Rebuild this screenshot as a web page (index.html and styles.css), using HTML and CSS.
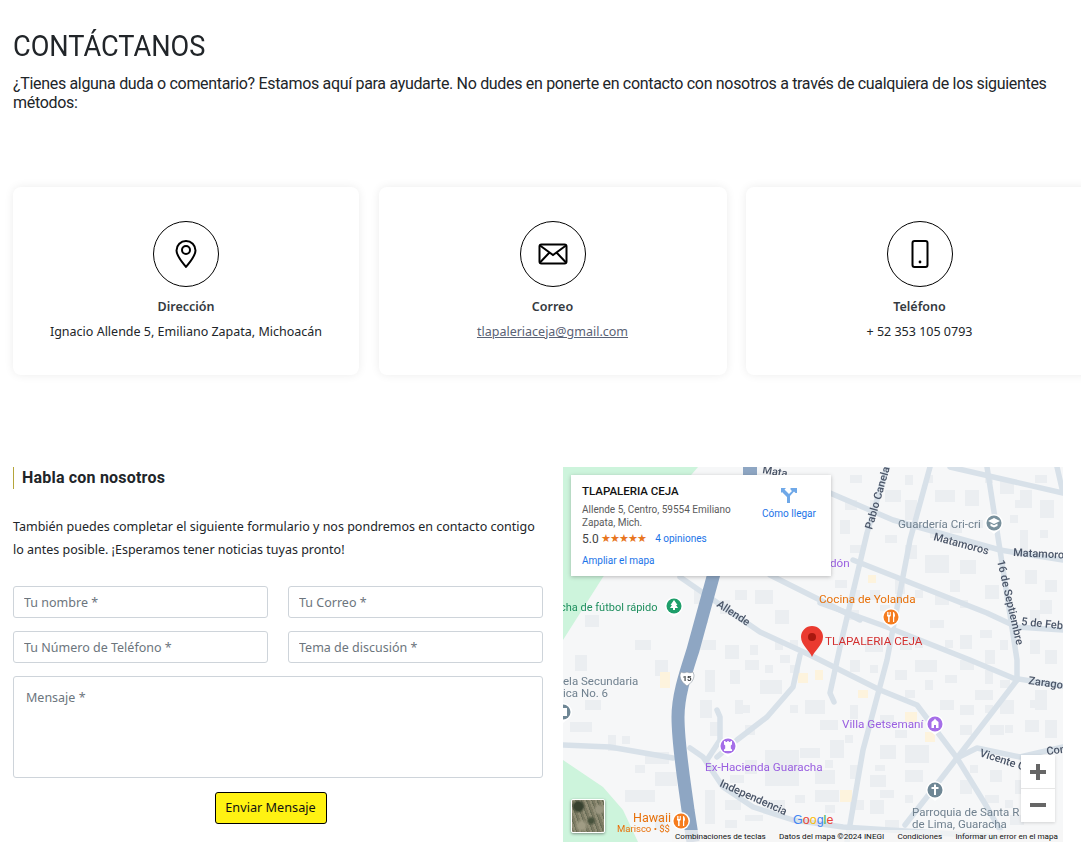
FILE: index.html
```html
<!DOCTYPE html>
<html lang="es">
<head>
<meta charset="utf-8">
<title>Contáctanos</title>
<link rel="stylesheet" href="styles.css">
</head>
<body>
<main class="page">
  <header class="intro">
    <h1>CONTÁCTANOS</h1>
    <p>¿Tienes alguna duda o comentario? Estamos aquí para ayudarte. No dudes en ponerte en contacto con nosotros a través de cualquiera de los siguientes métodos:</p>
  </header>

  <section class="cards">
    <article class="card">
      <div class="round">
        <svg width="26" height="30" viewBox="0 0 26 30" fill="none" stroke="#000" stroke-width="2"><path d="M13 28C9 23 3.500 17 3.500 11.500a9.500 9.500 0 0 1 19 0C22.500 17 17 23 13 28Z" stroke-linejoin="round"/><circle cx="13" cy="11" r="4"/></svg>
      </div>
      <h3>Dirección</h3>
      <p>Ignacio Allende 5, Emiliano Zapata, Michoacán</p>
    </article>
    <article class="card">
      <div class="round">
        <svg width="30" height="24" viewBox="0 0 30 24" fill="none" stroke="#000" stroke-width="2"><rect x="1.500" y="2.500" width="27" height="19" rx="2"/><path d="M2 3.500 15 13 28 3.500M2 20.500l9.500-10M28 20.500l-9.500-10"/></svg>
      </div>
      <h3>Correo</h3>
      <p><a href="#">tlapaleriaceja@gmail.com</a></p>
    </article>
    <article class="card">
      <div class="round">
        <svg width="20" height="30" viewBox="0 0 20 30" fill="none" stroke="#000" stroke-width="2"><rect x="2.500" y="2" width="15" height="26" rx="2"/><circle cx="10" cy="23" r="1.400" fill="#000" stroke="none"/></svg>
      </div>
      <h3>Teléfono</h3>
      <p>+ 52 353 105 0793</p>
    </article>
  </section>

  <section class="contact">
    <form class="form">
      <h2>Habla con nosotros</h2>
      <p class="lead">También puedes completar el siguiente formulario y nos pondremos en contacto contigo lo antes posible. ¡Esperamos tener noticias tuyas pronto!</p>
      <div class="fields">
        <input type="text" placeholder="Tu nombre *">
        <input type="text" placeholder="Tu Correo *">
        <input type="text" placeholder="Tu Número de Teléfono *">
        <input type="text" placeholder="Tema de discusión *">
        <textarea placeholder="Mensaje *"></textarea>
      </div>
      <div class="actions"><button type="button">Enviar Mensaje</button></div>
    </form>

    <div class="map">
      <svg class="map-art" width="500" height="375" viewBox="563 467 500 375">
        <rect class="land" x="563" y="467" width="500" height="375"/>
        <path class="park" d="M563 467H698L603 577 563 640ZM563 760 603 787 623 810 638 842H563Z"/>
        <path class="bld" d="M585 615h14v12h-14zM575 655h12v16h-12zM635 640h16v10h-16zM655 660h13v16h-13zM585 700h16v10h-16zM570 722h22v10h-22zM608 735h8v16h-8zM622 736h8v8h-8zM635 765h10v8h-10zM645 752h24v12h-24zM655 772h22v14h-22zM625 790h30v12h-30zM655 815h10v15h-10zM694 590h14v14h-14zM700 615h8v8h-8zM720 600h10v14h-10zM735 590h12v10h-12zM755 590h18v14h-18zM775 610h14v14h-14zM700 640h16v10h-16zM725 645h14v14h-14zM750 645h8v10h-8zM705 670h10v22h-10zM730 670h10v14h-10zM745 660h14v10h-14zM760 680h22v14h-22zM700 700h12v18h-12zM735 700h8v14h-8zM745 725h10v10h-10zM710 722h10v14h-10zM765 750h34v36h-34zM805 700h20v14h-20zM820 720h18v10h-18zM800 748h20v10h-20zM815 770h20v14h-20zM765 800h20v10h-20zM815 790h24v12h-24zM705 790h10v34h-10zM725 800h16v10h-16zM845 610h14v10h-14zM865 640h18v12h-18zM840 520h10v14h-10zM885 490h16v12h-16zM905 500h12v20h-12zM935 490h20v12h-20zM965 490h14v16h-14zM1000 480h14v14h-14zM1020 490h12v18h-12zM1040 500h14v18h-14zM905 545h12v14h-12zM925 555h24v18h-24zM960 560h16v14h-16zM1020 530h8v24h-8zM1040 530h8v8h-8zM1025 570h12v14h-12zM1045 580h12v12h-12zM1040 600h12v14h-12zM950 580h10v12h-10zM985 585h14v14h-14zM930 620h14v8h-14zM960 635h12v14h-12zM1030 640h10v14h-10zM1045 650h12v14h-12zM915 660h22v12h-22zM960 660h14v10h-14zM975 690h18v10h-18zM1035 690h12v20h-12zM1025 720h14v12h-14zM1045 720h12v18h-12zM990 725h14v10h-14zM905 745h24v18h-24zM905 770h18v12h-18zM880 745h16v14h-16zM870 775h16v12h-16zM990 770h12v12h-12zM1015 780h18v14h-18zM1040 790h14v20h-14zM1010 815h14v10h-14zM960 780h12v14h-12zM870 800h14v14h-14zM885 820h14v10h-14zM940 700h14v10h-14zM1000 700h14v14h-14zM830 740h14v18h-14zM880 790h14v8h-14zM1030 610h10v10h-10zM850 590h10v10h-10zM835 580h12v8h-12zM870 590h10v10h-10zM895 580h10v14h-10zM915 590h8v8h-8zM935 595h14v10h-14zM960 600h8v8h-8zM880 605h10v6h-10zM900 640h12v10h-12zM915 640h8v8h-8zM945 640h8v8h-8zM980 630h12v8h-12zM985 650h10v14h-10zM1000 640h8v10h-8zM850 660h10v12h-10zM870 665h8v8h-8zM895 670h12v10h-12zM905 690h10v8h-10zM925 680h8v10h-8zM945 675h12v8h-12zM985 670h8v14h-8zM1000 680h10v8h-10zM960 705h14v10h-14zM985 705h8v8h-8zM960 725h12v10h-12zM1005 725h8v8h-8zM1030 700h8v8h-8zM850 705h8v14h-8zM880 715h14v8h-14zM895 730h12v8h-12zM845 735h8v8h-8zM875 765h10v6h-10zM825 760h8v8h-8zM850 765h8v14h-8zM825 805h10v8h-10zM850 800h14v10h-14zM905 795h8v8h-8zM970 765h8v8h-8zM985 795h14v8h-14zM1005 800h8v8h-8zM1035 770h8v10h-8zM1020 760h8v8h-8zM740 705h10v8h-10zM775 640h8v10h-8zM790 640h8v8h-8zM780 655h10v8h-10zM765 665h8v8h-8zM790 665h10v8h-10zM790 705h8v8h-8zM745 760h12v14h-12zM730 775h14v8h-14zM795 795h10v8h-10zM745 815h18v6h-18zM725 820h12v8h-12zM975 520h8v8h-8zM1010 515h8v8h-8zM1015 500h8v8h-8zM930 530h8v8h-8zM950 525h12v8h-12zM885 535h12v8h-12zM850 545h14v8h-14zM985 475h8v8h-8zM1035 475h12v8h-12zM925 475h8v8h-8zM905 475h8v10h-8zM850 475h12v8h-12zM870 500h8v14h-8zM845 500h12v10h-12z"/>
        <path class="tan" d="M660 672h10v16h-10zM798 673h10v10h-10zM868 575h8v8h-8zM858 690h10v8h-10zM905 712h12v10h-12zM925 732h10v10h-10zM840 790h12v12h-12zM815 670h8v10h-8z"/>
        <g class="road">
          <path d="M887 467 867 533 840 647 830 693 834 702"/>
          <path d="M930 467 910 540 887 660 863 750 847 842"/>
          <path d="M830 493 893 520 1000 550 1063 560"/>
          <path d="M987 467 1000 550 1017 660 1017 680"/>
          <path d="M950 467 1063 493M1057 467 1063 493"/>
          <path d="M853 560 987 613 1017 627 1063 630"/>
          <path d="M820 603 887 627 970 660 1013 678 1063 686"/>
          <path d="M1017 680 957 758 930 793 905 825"/>
          <path d="M957 758 977 748 1020 757 1063 747"/>
          <path d="M800 655 793 687 767 717 737 740 717 757"/>
          <path d="M717 710 720 717 720 740 707 760"/>
          <path d="M690 748 703 757 723 787 753 807 793 820 843 827 1000 837"/>
          <path d="M563 745 610 747 673 758"/>
          <path d="M680 577 760 632 810 655 880 690 917 705 957 758 987 807 1000 830"/>
          <path d="M770 575 860 620"/>
        </g>
        <path class="hwy" d="M722 545 713 577 693 650C686 672 678 695 678 717 678 745 684 780 688 810L693 842"/>
        <rect class="transit" x="743" y="467" width="14" height="8"/>

        <g class="t-grey">
          <text x="898" y="528">Guardería Cri-cri</text>
          <text x="563" y="685">ela Secundaria</text>
          <text x="563" y="697">ica No. 6</text>
          <text x="912" y="816">Parroquia de Santa R</text>
          <text x="912" y="828">de Lima, Guaracha</text>
        </g>
        <g class="t-road">
          <text transform="translate(933 540) rotate(15)">Matamoros</text>
          <text transform="translate(1013 556) rotate(3)">Matamoros</text>
          <text transform="translate(997 561) rotate(77)">16 de Septiembre</text>
          <text transform="translate(1021 625) rotate(6)">5 de Feb</text>
          <text transform="translate(872 530) rotate(-74)">Pablo Canela</text>
          <text transform="translate(716 606) rotate(33)">Allende</text>
          <text transform="translate(719 786) rotate(24)">Independencia</text>
          <text transform="translate(979 756) rotate(18)">Vicente G</text>
          <text transform="translate(1047 755) rotate(-8)">Con</text>
          <text transform="translate(1028 684) rotate(8)">Zarago</text>
          <text transform="translate(762 473) rotate(10)">Mata</text>
        </g>
        <text class="t-purple" x="830" y="567">dón</text>
        <text class="t-purple" x="705" y="771">Ex-Hacienda Guaracha</text>
        <text class="t-purple" x="842" y="728">Villa Getsemaní</text>
        <text class="t-orange" x="819" y="603">Cocina de Yolanda</text>
        <text class="t-red" x="825" y="645">TLAPALERIA CEJA</text>
        <text class="t-green" x="560" y="611">cha de fútbol rápido</text>
        <text class="t-orange t-big" x="633" y="822">Hawaii</text>
        <text class="t-orange t-small" x="617" y="832">Marisco • $$</text>

        <g class="poi">
          <path d="M668 612l6 5 6-5z"/><circle cx="674" cy="606" r="9"/>
          <path d="M885 623l6 5 6-5z"/><circle cx="891" cy="617" r="9"/>
          <path d="M988 529l6 5 6-5z"/><circle cx="994" cy="523" r="9"/>
          <path d="M722 752l6 5 6-5z"/><circle cx="728" cy="746" r="9"/>
          <path d="M929 730l6 5 6-5z"/><circle cx="935" cy="724" r="9"/>
          <path d="M929 796l6 5 6-5z"/><circle cx="935" cy="790" r="9"/>
          <circle cx="681" cy="821" r="9"/>
          <path d="M557 718l6 5 6-5z"/><circle cx="563" cy="712" r="9"/>
        </g>
        <circle class="c-green" cx="674" cy="606" r="7.500"/><path class="c-w" d="M674 600l3.500 5h-1.500l2 3h-3v2h-2v-2h-3l2-3h-1.500z"/>
        <circle class="c-orange" cx="891" cy="617" r="7.500"/><path class="c-w" d="M887 612h.8v3h.7v-3h.8v3h.7v-3h.8v4l-1.200 1v5h-1.500v-5l-1.100-1zM893 612c1.500 0 2 2 2 4l-.8 1.500v4.500h-1.200z"/>
        <circle class="c-grey" cx="994" cy="523" r="7.500"/><path class="c-w" d="M994 518l6 3-6 3-6-3zM990.500 523.500l3.500 1.800 3.500-1.800v2.500l-3.500 1.500-3.500-1.500z"/>
        <circle class="c-purple" cx="728" cy="746" r="7.500"/><path class="c-w" d="M724 741h1.500v1h1.700v-1h1.600v1h1.700v-1h1.500v3.500l-1.200 1v3l1.200 1v1.500h-8v-1.500l1.200-1v-3l-1.200-1z"/>
        <circle class="c-purple" cx="935" cy="724" r="7.500"/><path class="c-w" d="M935 718.500l1 1.500 2.500 2v6h-7v-6l2.500-2zM934 725v3h2v-3z"/>
        <circle class="c-slate" cx="935" cy="790" r="7.500"/><path class="c-w" d="M934 784.500h2v2.500h2.500v2h-2.500v6h-2v-6h-2.500v-2h2.500z"/>
        <circle class="c-orange" cx="681" cy="821" r="7.500"/><path class="c-w" d="M677 816h.8v3h.7v-3h.8v3h.7v-3h.8v4l-1.200 1v5h-1.500v-5l-1.100-1zM683 816c1.500 0 2 2 2 4l-.8 1.500v4.500h-1.200z"/>
        <circle class="c-slate" cx="563" cy="712" r="7.500"/><path class="c-w" d="M563 708h4v8h-4z"/>
        <path class="shield" d="M681 672c2 1 4 1 6 0 2 1 4 1 6 0l1 3c0 5-3 8-7 11-4-3-7-6-7-11z"/>
        <text class="t-shield" x="687" y="681">15</text>
        <path class="pin" d="M812 657c-2-6-11-12-11-20a11 11 0 0 1 22 0c0 8-9 14-11 20z"/>
        <circle class="pin-dot" cx="812" cy="637" r="4"/>
      </svg>

      <div class="info">
        <div class="info-main">
          <strong>TLAPALERIA CEJA</strong>
          <address>Allende 5, Centro, 59554 Emiliano Zapata, Mich.</address>
          <div class="rating"><span class="score">5.0</span><span class="stars">★★★★★</span><a href="#">4 opiniones</a></div>
          <a class="enlarge" href="#">Ampliar el mapa</a>
        </div>
        <a class="route" href="#">
          <svg width="16" height="16" viewBox="0 0 16 16" fill="#6fa8e8"><path d="M6 16V10L1 5 0 6V1h5L3.500 2.500 6.500 5.500 8 7l2-2 1-1-1.500-1.500V1H16v5h-1.500L13 4.500 9 9v7z"/></svg>
          <span>Cómo llegar</span>
        </a>
      </div>
      <div class="thumb"></div>
      <div class="google"><b class="gb">G</b><b class="gr">o</b><b class="gy">o</b><b class="gb">g</b><b class="gg">l</b><b class="gr">e</b></div>
      <div class="zoom">
        <span class="plus"></span>
        <span class="minus"></span>
      </div>
      <div class="attrib">
        <span>Combinaciones de teclas</span>
        <span>Datos del mapa ©2024 INEGI</span>
        <span>Condiciones</span>
        <span>Informar un error en el mapa</span>
      </div>
    </div>
  </section>
</main>
</body>
</html>
```
FILE: styles.css
```css
* { box-sizing: border-box; }
html, body { margin: 0; padding: 0; overflow: hidden; background: #fff; }
body { font-family: "Noto Sans", "Open Sans", sans-serif; color: #212529; width: 1081px; height: 863px; }
.page { padding: 29px 0 0 13px; width: 1110px; }

.intro { width: 1040px; }
.intro h1 { margin: 0; font: 400 30px/34px Roboto, sans-serif; color: #212529; transform: scaleX(.905); transform-origin: left center; white-space: nowrap; }
.intro p { margin: 11px 0 0; font: 400 16px/19px Roboto, sans-serif; letter-spacing: -0.32px; color: #212529; }

.cards { display: grid; grid-template-columns: 346px 348px 347px; column-gap: 19.500px; margin-top: 75px; }
.card { height: 188px; background: #fff; border-radius: 8px; box-shadow: 0 0 10px rgba(0,0,0,.08); padding-top: 34px; text-align: center; }
.round { width: 66px; height: 66px; margin: 0 auto; border: 1px solid #000; border-radius: 50%; display: flex; align-items: center; justify-content: center; }
.card h3 { margin: 11px 0 0; font-size: 12.500px; line-height: 18px; font-weight: 600; color: #343a40; }
.card p { margin: 7px 0 0; font-size: 12.500px; line-height: 18px; color: #212529; }
.card a { color: #5a6275; }

.contact { display: grid; grid-template-columns: 530px 500px; column-gap: 20px; margin-top: 92px; }
.form h2 { margin: 0; padding-left: 8px; border-left: 1px solid #b5a53a; height: 22px; font: 700 16px/21px Roboto, sans-serif; letter-spacing: 0.2px; color: #212529; }
.lead { margin: 26px 0 0; font-size: 12.500px; line-height: 23px; color: #212529; }
.fields { display: grid; grid-template-columns: 255px 255px; gap: 13px 20px; margin-top: 25px; }
.fields input, .fields textarea { display: block; width: 100%; border: 1px solid #ced4da; border-radius: 3px; background: #fff; font-family: inherit; font-size: 12.500px; color: #495057; outline: none; }
.fields input { height: 32px; padding: 0 10px; }
.fields textarea { grid-column: 1 / -1; height: 102px; padding: 12px; resize: none; line-height: 18px; }
.fields input::placeholder, .fields textarea::placeholder { color: #6c757d; opacity: 1; }
.actions { display: flex; justify-content: center; margin-top: 14px; padding-right: 15px; }
.actions button { width: 112px; height: 32px; background: #fff212; border: 1px solid #000; border-radius: 3px; font-family: inherit; font-size: 12.700px; color: #111; padding: 0 0 3px; }

.map { position: relative; width: 500px; height: 375px; overflow: hidden; font-family: Roboto, Arial, sans-serif; }
.map-art { display: block; filter: blur(.35px); }
.map-art text { font-family: Roboto, Arial, sans-serif; font-size: 11.700px; }
.land { fill: #f6f7f8; }
.park { fill: #cdf4dc; }
.bld { fill: #ebeef1; }
.tan { fill: #fdf3dd; }
.transit { fill: #8ea6c3; }
.road path { fill: none; stroke: #d8e1e9; stroke-width: 5.500; stroke-linejoin: round; stroke-linecap: round; }
.hwy { fill: none; stroke: #8ea6c3; stroke-width: 13; stroke-linejoin: round; }
.t-grey text { fill: #70818f; }
.map-art .t-grey text { font-size: 11.500px; }
.map-art .t-road text { fill: #4a5568; font-weight: 500; font-size: 11px; }
.map-art .t-purple { fill: #9a5fe0; }
.map-art .t-orange { fill: #e8710a; }
.map-art .t-red { fill: #d32f2f; }
.map-art .t-green { fill: #1e8e5e; font-size: 11px; }
.map-art .t-big { font-size: 12.500px; }
.map-art .t-small { font-size: 9.500px; }
.map-art .t-shield { font-size: 8px; font-weight: 700; fill: #3c4043; text-anchor: middle; }
.poi { fill: #fff; }
.c-green { fill: #1e9e6a; }
.c-orange { fill: #f57c1f; }
.c-grey { fill: #78909c; }
.c-purple { fill: #a56ee8; }
.c-slate { fill: #6f8795; }
.c-w { fill: #fff; }
.shield { fill: #fff; stroke: #8a94a0; stroke-width: .6; }
.pin { fill: #ea3a30; }
.pin-dot { fill: #a8180f; }

.info { position: absolute; left: 8px; top: 8px; width: 260px; height: 101px; background: #fff; box-shadow: 0 1px 4px rgba(0,0,0,.25); padding: 9px 11px 0; display: flex; justify-content: space-between; }
.info-main { width: 156px; }
.info strong { display: block; font-size: 11.500px; line-height: 14px; font-weight: 500; color: #111; }
.info address { font-style: normal; font-size: 10px; line-height: 13px; color: #5b5b5b; margin-top: 5px; }
.info a { color: #1a73e8; text-decoration: none; }
.rating { display: flex; align-items: center; font-size: 10px; margin-top: 2px; line-height: 16px; white-space: nowrap; }
.score { font-size: 12px; color: #444; }
.stars { color: #e8761f; font-size: 11px; margin-left: 2px; letter-spacing: -.9px; margin-right: 9px; }
.enlarge { display: block; font-size: 10px; line-height: 13px; margin-top: 7px; }
.route { width: 70px; margin: 3px -4px 0 0; display: flex; flex-direction: column; align-items: center; font-size: 10px; line-height: 12px; }
.route span { margin-top: 5px; }
.thumb { position: absolute; left: 8px; top: 332px; width: 34px; height: 34px; border: 1px solid #fff; border-radius: 2px; box-shadow: 0 1px 3px rgba(0,0,0,.4); background: radial-gradient(circle at 20% 20%, #37412f 0 4px, transparent 7px), radial-gradient(circle at 60% 65%, #47513c 0 2px, transparent 5px), radial-gradient(circle at 85% 30%, #9a9680 0 3px, transparent 6px), radial-gradient(circle at 30% 80%, #a09c84 0 3px, transparent 7px), repeating-linear-gradient(70deg, #7c7a63 0 2px, #8f8c74 2px 4px, #6b6e58 4px 5px); }
.google { position: absolute; left: 230px; top: 346px; font-family: "Liberation Sans", Arial, sans-serif; font-size: 12.500px; line-height: 14px; }
.google b { font-weight: 400; }
.gb { color: #4285f4; } .gr { color: #ea4335; } .gy { color: #fbbc05; } .gg { color: #34a853; }
.zoom { position: absolute; left: 458px; top: 288px; width: 34px; height: 67px; background: #fff; box-shadow: 0 1px 3px rgba(0,0,0,.15); display: flex; flex-direction: column; }
.plus, .minus { position: relative; flex: 1; }
.plus { border-bottom: 1px solid #e6e6e6; }
.plus::before, .minus::before { content: ""; position: absolute; left: 9px; top: 15px; width: 16px; height: 4px; background: #666; }
.plus::after { content: ""; position: absolute; left: 15px; top: 9px; width: 4px; height: 16px; background: #666; }
.minus::before { top: 14px; }
.attrib { position: absolute; right: 0; bottom: 0; height: 12px; width: 391px; padding: 0 5px 0 3px; background: rgba(245,245,245,.75); display: flex; justify-content: space-between; font-size: 8.100px; line-height: 12px; color: #111; white-space: nowrap; }
```
